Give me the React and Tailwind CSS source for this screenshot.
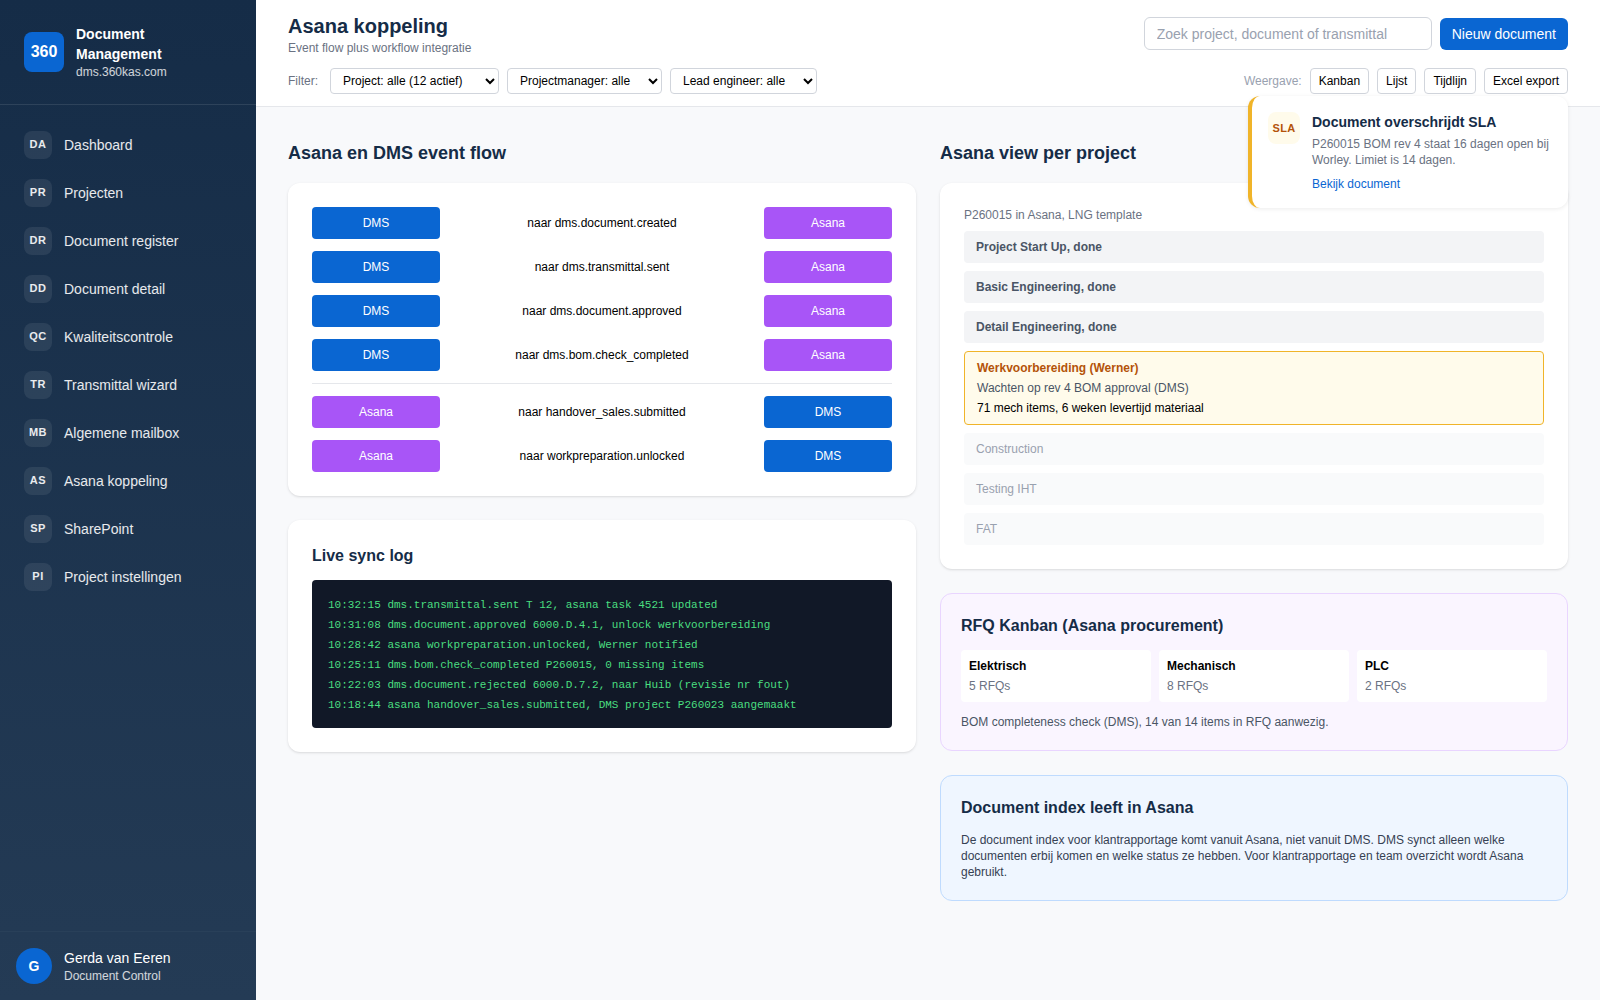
const navItems = [
  ["DA", "Dashboard"],
  ["PR", "Projecten"],
  ["DR", "Document register"],
  ["DD", "Document detail"],
  ["QC", "Kwaliteitscontrole"],
  ["TR", "Transmittal wizard"],
  ["MB", "Algemene mailbox"],
  ["AS", "Asana koppeling"],
  ["SP", "SharePoint"],
  ["PI", "Project instellingen"],
];

const flowTop = [
  "naar dms.document.created",
  "naar dms.transmittal.sent",
  "naar dms.document.approved",
  "naar dms.bom.check_completed",
];

const flowBottom = ["naar handover_sales.submitted", "naar workpreparation.unlocked"];

const logLines = [
  "10:32:15 dms.transmittal.sent T 12, asana task 4521 updated",
  "10:31:08 dms.document.approved 6000.D.4.1, unlock werkvoorbereiding",
  "10:28:42 asana workpreparation.unlocked, Werner notified",
  "10:25:11 dms.bom.check_completed P260015, 0 missing items",
  "10:22:03 dms.document.rejected 6000.D.7.2, naar Huib (revisie nr fout)",
  "10:18:44 asana handover_sales.submitted, DMS project P260023 aangemaakt",
];

const rfqs = [
  ["Elektrisch", "5 RFQs"],
  ["Mechanisch", "8 RFQs"],
  ["PLC", "2 RFQs"],
];

function Sidebar() {
  return (
    <aside className="flex w-[256px] shrink-0 flex-col bg-gradient-to-b from-[#152c47] to-[#243b55] text-white">
      <div className="flex items-center gap-3 border-b border-white/10 px-6 py-6">
        <div className="flex h-10 w-10 shrink-0 items-center justify-center rounded-lg bg-[#0a66d2] text-base font-bold">360</div>
        <div>
          <div className="text-sm leading-5 font-bold">Document Management</div>
          <div className="text-xs leading-4 text-white/80">dms.360kas.com</div>
        </div>
      </div>
      <nav className="flex-1 px-6 py-4">
        {navItems.map(([code, label]) => (
          <div key={code} className="flex h-12 items-center gap-3 text-sm text-white/90">
            <div className="flex h-7 w-7 items-center justify-center rounded-lg bg-white/[0.08] text-[11px] font-bold tracking-[0.5px]">{code}</div>
            {label}
          </div>
        ))}
      </nav>
      <div className="flex items-center gap-3 border-t border-white/[0.03] px-4 py-4">
        <div className="flex h-9 w-9 items-center justify-center rounded-full bg-[#0a66d2] text-sm font-bold">G</div>
        <div>
          <div className="text-sm leading-5">Gerda van Eeren</div>
          <div className="text-xs leading-4 text-white/80">Document Control</div>
        </div>
      </div>
    </aside>
  );
}

function ViewButton({ children }) {
  return <button className="h-[26px] rounded border border-gray-300 bg-white px-2 text-xs text-black">{children}</button>;
}

function Header() {
  return (
    <header className="border-b border-gray-200 bg-white px-8 pt-3 pb-3">
      <div className="flex items-start justify-between">
        <div>
          <h1 className="text-xl leading-[28px] font-bold text-[#152c47]">Asana koppeling</h1>
          <p className="text-xs leading-4 text-gray-500">Event flow plus workflow integratie</p>
        </div>
        <div className="mt-[5px] flex items-center gap-2">
          <input
            readOnly
            placeholder="Zoek project, document of transmittal"
            className="h-[33px] w-[288px] rounded-md border border-gray-300 bg-white px-3 text-sm outline-none placeholder:text-gray-400"
          />
          <button className="h-8 rounded-md bg-[#0a66d2] px-3 text-sm text-white">Nieuw document</button>
        </div>
      </div>
      <div className="mt-3 flex items-center justify-between">
        <div className="flex items-center gap-2">
          <span className="mr-1 text-xs text-gray-500">Filter:</span>
          <select className="h-[26px] w-[169px] rounded border border-gray-300 bg-white pr-[11px] pl-2 text-xs text-black">
            <option>Project: alle (12 actief)</option>
          </select>
          <select className="h-[26px] w-[155px] rounded border border-gray-300 bg-white pr-[11px] pl-2 text-xs text-black">
            <option>Projectmanager: alle</option>
          </select>
          <select className="h-[26px] w-[147px] rounded border border-gray-300 bg-white pr-[11px] pl-2 text-xs text-black">
            <option>Lead engineer: alle</option>
          </select>
        </div>
        <div className="flex items-center gap-2">
          <span className="text-xs text-gray-400">Weergave:</span>
          <ViewButton>Kanban</ViewButton>
          <ViewButton>Lijst</ViewButton>
          <ViewButton>Tijdlijn</ViewButton>
          <ViewButton>Excel export</ViewButton>
        </div>
      </div>
    </header>
  );
}

function Pill({ kind }) {
  const color = kind === "DMS" ? "bg-[#0a66d2]" : "bg-[#a855f7]";
  return <div className={`flex h-8 items-center justify-center rounded text-xs text-white ${color}`}>{kind}</div>;
}

function FlowRow({ from, to, label }) {
  return (
    <div className="grid grid-cols-[128px_1fr_128px] items-center">
      <Pill kind={from} />
      <div className="text-center text-xs text-black">{label}</div>
      <Pill kind={to} />
    </div>
  );
}

function Card({ children, className = "" }) {
  return <section className={`rounded-xl bg-white p-6 shadow-sm ${className}`}>{children}</section>;
}

function Phase({ label, done }) {
  return done ? (
    <div className="flex h-8 items-center rounded bg-[#f3f4f6] px-3 text-xs font-bold text-gray-600">{label}</div>
  ) : (
    <div className="flex h-8 items-center rounded bg-[#f9fafb] px-3 text-xs text-gray-400">{label}</div>
  );
}

function LeftColumn() {
  return (
    <div>
      <h2 className="mb-4 text-lg leading-7 font-bold text-[#152c47]">Asana en DMS event flow</h2>
      <Card>
        <div className="flex flex-col gap-3">
          {flowTop.map((label) => (
            <FlowRow key={label} from="DMS" to="Asana" label={label} />
          ))}
          <div className="h-px bg-gray-200" />
          {flowBottom.map((label) => (
            <FlowRow key={label} from="Asana" to="DMS" label={label} />
          ))}
        </div>
      </Card>
      <Card className="mt-6">
        <h3 className="mb-3 text-base leading-6 font-bold text-[#152c47]">Live sync log</h3>
        <div className="rounded bg-[#111827] px-4 pt-[15px] pb-[13px] font-['Liberation_Mono',monospace] text-[11px] leading-5 text-[#4ade80]">
          {logLines.map((line) => (
            <div key={line}>{line}</div>
          ))}
        </div>
      </Card>
    </div>
  );
}

function RightColumn() {
  return (
    <div>
      <h2 className="mb-4 text-lg leading-7 font-bold text-[#152c47]">Asana view per project</h2>
      <Card>
        <div className="mb-2 text-xs leading-4 text-gray-500">P260015 in Asana, LNG template</div>
        <div className="flex flex-col gap-2">
          <Phase label="Project Start Up, done" done />
          <Phase label="Basic Engineering, done" done />
          <Phase label="Detail Engineering, done" done />
          <div className="rounded border border-[#f0b429] bg-[#fffbeb] px-3 py-[6px] text-xs leading-5">
            <div className="font-bold text-[#b45309]">Werkvoorbereiding (Werner)</div>
            <div className="text-gray-600">Wachten op rev 4 BOM approval (DMS)</div>
            <div className="text-black">71 mech items, 6 weken levertijd materiaal</div>
          </div>
          <Phase label="Construction" />
          <Phase label="Testing IHT" />
          <Phase label="FAT" />
        </div>
      </Card>
      <section className="mt-6 rounded-xl border border-[#e9d5ff] bg-[#faf5ff] p-5">
        <h3 className="mb-3 text-base leading-6 font-bold text-[#152c47]">RFQ Kanban (Asana procurement)</h3>
        <div className="grid grid-cols-3 gap-2">
          {rfqs.map(([name, count]) => (
            <div key={name} className="rounded bg-white px-2 py-[6px] text-xs leading-5">
              <div className="font-bold text-black">{name}</div>
              <div className="text-gray-500">{count}</div>
            </div>
          ))}
        </div>
        <p className="mt-3 text-xs leading-4 text-gray-600">BOM completeness check (DMS), 14 van 14 items in RFQ aanwezig.</p>
      </section>
      <section className="mt-6 rounded-xl border border-[#bfdbfe] bg-[#eff6ff] p-5">
        <h3 className="mb-3 text-base leading-6 font-bold text-[#152c47]">Document index leeft in Asana</h3>
        <p className="text-xs leading-4 text-gray-700">
          De document index voor klantrapportage komt vanuit Asana, niet vanuit DMS. DMS synct alleen welke documenten erbij komen en welke status ze hebben. Voor klantrapportage en team overzicht wordt Asana gebruikt.
        </p>
      </section>
    </div>
  );
}

function SlaToast() {
  return (
    <div className="absolute top-[96px] right-8 z-10 flex w-[320px] gap-3 rounded-xl border-l-4 border-[#f0b429] bg-white p-4 shadow-[0_1px_4px_rgba(0,0,0,0.08)]">
      <div className="flex h-8 w-8 shrink-0 items-center justify-center rounded-lg bg-[#fffbeb] text-[11px] font-bold tracking-[0.3px] text-[#b45309]">SLA</div>
      <div>
        <div className="mb-1 text-sm leading-5 font-bold text-[#152c47]">Document overschrijdt SLA</div>
        <p className="text-xs leading-4 text-gray-500">P260015 BOM rev 4 staat 16 dagen open bij Worley. Limiet is 14 dagen.</p>
        <div className="mt-2 text-xs leading-4 text-[#0a66d2]">Bekijk document</div>
      </div>
    </div>
  );
}

export default function App() {
  return (
    <div className="relative flex h-screen overflow-hidden bg-[#f8f9fb] font-['Liberation_Sans',Arial,sans-serif]">
      <Sidebar />
      <main className="flex-1">
        <Header />
        <div className="grid grid-cols-2 gap-6 px-8 pt-8">
          <LeftColumn />
          <RightColumn />
        </div>
      </main>
      <SlaToast />
    </div>
  );
}
